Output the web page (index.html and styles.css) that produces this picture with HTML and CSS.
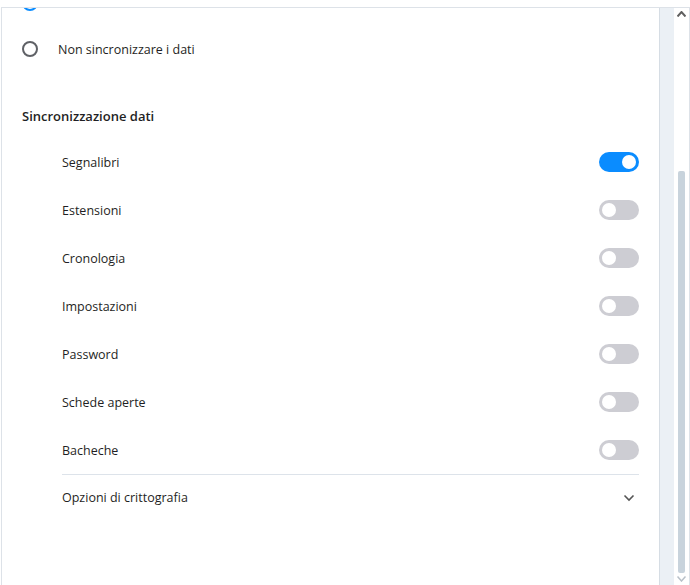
FILE: index.html
```html
<!DOCTYPE html>
<html lang="it">
<head>
<meta charset="utf-8">
<link rel="stylesheet" href="styles.css">
</head>
<body>
<div class="frame">
  <div class="main">
    <div class="content">
      <div class="radio-row"><span class="radio checked"></span></div>
      <div class="radio-row"><span class="radio"></span><span class="label">Non sincronizzare i dati</span></div>
      <h2 class="heading">Sincronizzazione dati</h2>
      <div class="list">
        <div class="row"><span class="label">Segnalibri</span><span class="toggle on"></span></div>
        <div class="row"><span class="label">Estensioni</span><span class="toggle"></span></div>
        <div class="row"><span class="label">Cronologia</span><span class="toggle"></span></div>
        <div class="row"><span class="label">Impostazioni</span><span class="toggle"></span></div>
        <div class="row"><span class="label">Password</span><span class="toggle"></span></div>
        <div class="row"><span class="label">Schede aperte</span><span class="toggle"></span></div>
        <div class="row"><span class="label">Bacheche</span><span class="toggle"></span></div>
        <div class="row expand"><span class="label">Opzioni di crittografia</span>
          <svg class="chev" width="12" height="8" viewBox="0 0 12 8"><path d="M1.5 1.5 L6 6 L10.5 1.5" fill="none" stroke="#555" stroke-width="1.6"/></svg>
        </div>
      </div>
    </div>
  </div>
  <div class="strip"></div>
  <div class="scrollbar">
    <svg class="arrow up" width="9" height="6" viewBox="0 0 9 6"><path d="M0.5 5.5 L4.5 1 L8.5 5.5" fill="none" stroke="#606060" stroke-width="2"/></svg>
    <div class="track"><div class="thumb"></div></div>
    <svg class="arrow down" width="9" height="6" viewBox="0 0 9 6"><path d="M0.5 0.5 L4.5 5 L8.5 0.5" fill="none" stroke="#b8c0c8" stroke-width="1.5"/></svg>
  </div>
</div>
</body>
</html>
```
FILE: styles.css
```css
html, body {
  margin: 0;
  padding: 0;
  background: #fff;
}
body {
  font-family: "Open Sans", "Noto Sans", sans-serif;
  font-size: 12.5px;
  color: #1f1f24;
}
.frame {
  margin-top: 7px;
  margin-left: 1px;
  height: 578px;
  border-top: 1px solid #dde2e8;
  border-left: 1px solid #dde2e8;
  border-right: 1px solid #dde2e8;
  display: flex;
  box-sizing: border-box;
}
.main {
  flex: 1;
  overflow: hidden;
}
.content {
  margin-top: -28px;
}
.radio-row {
  height: 46px;
  display: flex;
  align-items: center;
  padding-left: 20px;
}
.radio {
  width: 12px;
  height: 12px;
  border: 2px solid #5f6166;
  border-radius: 50%;
  margin-right: 20px;
}
.radio.checked {
  border-color: #0a8cff;
  border-width: 2px;
  box-shadow: inset 0 0 0 3px #fff, inset 0 0 0 8px #0a8cff;
}
.heading {
  margin: 34px 0 12px 20px;
  font-size: 13px;
  font-weight: 600;
  line-height: 20px;
}
.list {
  margin-left: 60px;
  margin-right: 20px;
}
.row {
  height: 48px;
  display: flex;
  align-items: center;
  justify-content: space-between;
}
.row.expand {
  height: 45px;
  border-top: 1px solid #dde3ea;
}
.chev {
  margin-right: 4px;
}
.toggle {
  position: relative;
  width: 40px;
  height: 20px;
  border-radius: 10px;
  background: #cdcdd3;
}
.toggle::after {
  content: "";
  position: absolute;
  top: 3px;
  left: 3px;
  width: 14px;
  height: 14px;
  border-radius: 50%;
  background: #fff;
}
.toggle.on {
  background: #0a8cff;
}
.toggle.on::after {
  left: 23px;
}
.strip {
  width: 14px;
  background: #ebf0f5;
  border-left: 1px solid #d6dde4;
}
.scrollbar {
  width: 15px;
  display: flex;
  flex-direction: column;
  align-items: center;
}
.arrow.up {
  margin-top: 3px;
}
.track {
  flex: 1;
  display: flex;
  flex-direction: column;
  justify-content: flex-end;
  width: 7px;
  padding-bottom: 3px;
}
.thumb {
  height: 402px;
  background: #c8d3dc;
  border-radius: 2px;
}
.arrow.down {
  margin-bottom: 3px;
}
```
